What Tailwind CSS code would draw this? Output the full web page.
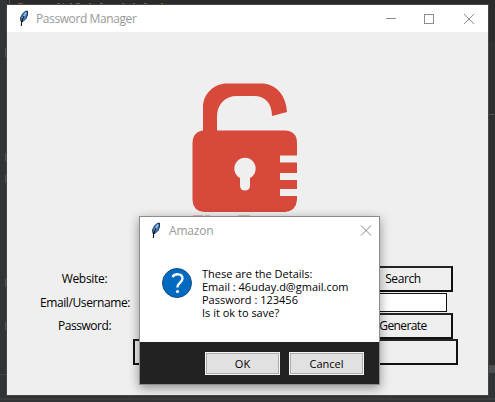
<!DOCTYPE html>
<html lang="en">
<head>
<meta charset="utf-8">
<title>Password Manager</title>
<script src="https://cdn.jsdelivr.net/npm/@tailwindcss/browser@4"></script>
</head>
<body class="relative w-[495px] h-[402px] overflow-hidden bg-[#2b2b2b] font-['Open_Sans','Noto_Sans',sans-serif] text-[12px] leading-[16px] text-black">
<svg width="0" height="0" class="absolute">
  <symbol id="feather" viewBox="0 0 12 17">
    <path d="M3 11.500 2.500 8 4.500 4 7 1.500 9.500 1 9.500 5 8 8.500 5 11.500Z" fill="#397fca" stroke="#1b2636" stroke-width=".9"/>
    <path d="M4.500 8.500 8 2.500" stroke="#9cccf5" stroke-width="1.400"/>
    <path d="M3.300 16 3.800 11 6 6" fill="none" stroke="#000" stroke-width="1"/>
  </symbol>
</svg>

<!-- Desktop behind the window -->
<svg class="absolute inset-0" width="495" height="402" fill="none" shape-rendering="crispEdges">
  <path d="M0 0H7V402H0Z" fill="#313335"/>
  <path d="M9 0V4" stroke="#555"/>
  <path d="M18 3.500H23M57 3.500H60M70 3.500H72M89 3.500H91M122 3.500H124M133 3.500H135M161 3.500H163" stroke="#805733"/>
  <path d="M63 3.500H64M76 3.500H80M100 3.500H103M144 3.500H147" stroke="#646464"/>
  <path d="M7 48.500H5.500V56.500H7M7 153.500H5.500V160.500H7M7 175.500H5.500V182.500H7M7 279.500H5.500V286.500H7M7 322.500H5.500V329.500H7" stroke="#505254"/>
  <path d="M0 374.500H7" stroke="#414345"/>
  <path d="M488 41H495V365H488Z" fill="#2f2f2f"/>
  <path d="M488 114.500H494" stroke="#555"/>
  <path d="M488 365H495V373H488Z" fill="#4b4d4f"/>
  <path d="M488 373H495V397H488Z" fill="#313335"/>
  <path d="M0 396H495V402H0Z" fill="#303234"/>
  <path d="M0 398H495V400H0Z" fill="#3a3c3e"/>
</svg>

<!-- Main window -->
<main class="absolute left-[6px] top-[4px] w-[483px] h-[392px] border border-[#454747] bg-[#efefef]">
  <header class="flex h-[27px] items-center bg-white">
    <svg class="ml-[11px] mr-[6px]" width="12" height="17"><use href="#feather"/></svg>
    <h1 class="w-[349px] whitespace-nowrap tracking-[-0.4px] text-[#999]">Password Manager</h1>
    <svg width="90" height="13" fill="none" stroke="#8c8c8c">
      <path d="M1 6.500H11M39.500 2.500H48.500V11.500H39.500Z" shape-rendering="crispEdges"/>
      <path d="m79 2 10 10m0-10L79 12"/>
    </svg>
  </header>

  <div class="flex h-[234px] justify-center pt-[51px] pr-[5px]">
    <svg width="106" height="139" fill="#d6493b">
      <path d="M11 50V24C11 11 22 .5 35 .5H69C83 .5 94 11 95 29L80 33C80 20 73 13 62 13H45C33 13 25 21 25 34V50Z"/>
      <path fill-rule="evenodd" d="M12 47.500H93Q105 48 105 60V72.500H88V79.500H105V90H88V97H105V106H88V113H105V117Q104 128 93 129H12Q1 128 .5 117V60Q1 48 12 47.500ZM48 95V103Q48.500 107.500 53 107.500T58 103V95A10.700 10.700 0 1 0 48 95Z"/>
      <path d="M1 133H11M13 133H18M46 133H58" stroke="#cf837b"/>
    </svg>
  </div>

  <form class="flex flex-col">
    <div class="flex h-[26px] items-center pl-[23px]">
      <label class="w-[109px] text-center tracking-[-0.3px]">Website:</label>
      <div class="h-[19px] w-[214px] border border-black bg-white"></div>
      <button type="button" class="h-[26px] w-[100px] border-2 border-[#111] border-t-[#252525] text-center tracking-[-0.4px]">Search</button>
    </div>
    <div class="flex h-[21px] items-center pl-[23px]">
      <label class="w-[109px] pl-px text-center tracking-[-0.4px]">Email/Username:</label>
      <div class="h-[19px] w-[308px] border border-[#111] bg-white"></div>
    </div>
    <div class="flex h-[26px] items-center pl-[23px]">
      <label class="w-[109px] text-center tracking-[-0.45px]">Password:</label>
      <div class="h-[19px] w-[214px] border border-black bg-white"></div>
      <button type="button" class="h-[26px] w-[100px] border-2 border-[#111] border-t-[#252525] text-center tracking-[-0.6px]">Generate</button>
    </div>
    <button type="button" class="ml-[126px] h-[26px] w-[325px] border-2 border-[#111] border-t-[#252525]">Add</button>
  </form>
</main>

<!-- Confirmation dialog -->
<section class="absolute left-[139px] top-[216px] flex h-[169px] w-[241px] flex-col border border-[#8d8d8d] bg-white shadow-[0_3px_10px_rgba(0,0,0,0.4)]">
  <header class="flex h-[27px] shrink-0 items-center">
    <svg class="ml-[10px] mr-[7px]" width="12" height="17"><use href="#feather"/></svg>
    <h2 class="flex-1 tracking-[-0.2px] text-[#999]">Amazon</h2>
    <svg class="mr-[7px]" width="12" height="12" stroke="#858585"><path d="m1 .5 10 10m0-10L1 10.500"/></svg>
  </header>
  <div class="flex flex-1 pl-[22px] pt-[23px]">
    <svg width="31" height="32" class="mr-[9px] shrink-0" fill="none">
      <circle cx="15" cy="16" r="14.500" fill="#0069c0" stroke="#174f86"/>
      <path d="M10.500 10C13 6 20.500 6.500 20.500 11.500C20.500 15.500 15.500 16 15.500 20.500" stroke="#fff" stroke-width="2.400"/>
      <circle cx="15.500" cy="24.500" r="1.600" fill="#fff"/>
    </svg>
    <p class="whitespace-nowrap text-[11px] leading-[13px]">These are the Details:<br>Email : 46uday.d@gmail.com<br>Password : 123456<br>Is it ok to save?</p>
  </div>
  <footer class="flex h-[42px] shrink-0 items-center justify-end gap-[9px] bg-[#222] pr-[15px]">
    <button type="button" class="h-[23px] w-[75px] border border-[#f5f5f5] bg-[#adadad] p-px text-[11px] leading-[19px]"><span class="block h-[19px] bg-[#e1e1e1]">OK</span></button>
    <button type="button" class="h-[23px] w-[75px] border border-[#f5f5f5] bg-[#adadad] p-px text-[11px] leading-[19px]"><span class="block h-[19px] bg-[#e1e1e1]">Cancel</span></button>
  </footer>
</section>
</body>
</html>
